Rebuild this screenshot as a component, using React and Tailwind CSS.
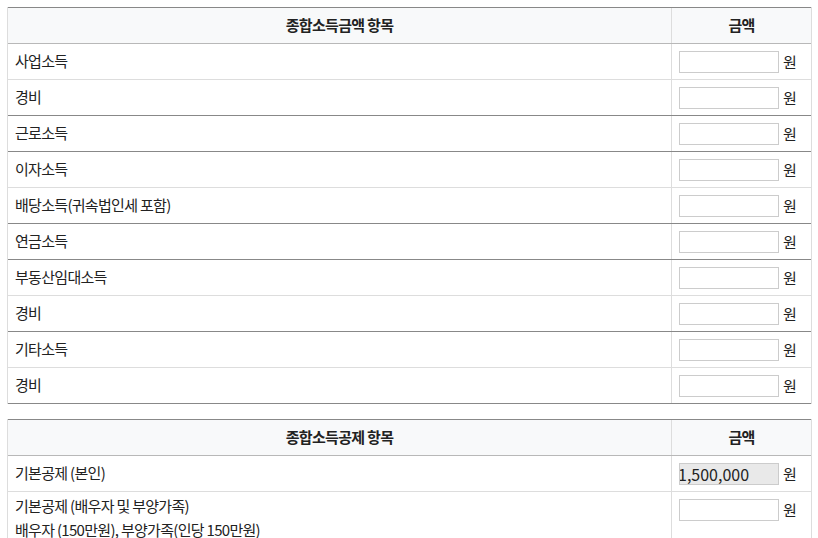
import React from "react";

const incomeRows = [
  { label: "사업소득", line: "light" },
  { label: "경비", line: "dark" },
  { label: "근로소득", line: "dark" },
  { label: "이자소득", line: "light" },
  { label: "배당소득(귀속법인세 포함)", line: "dark" },
  { label: "연금소득", line: "dark" },
  { label: "부동산임대소득", line: "light" },
  { label: "경비", line: "dark" },
  { label: "기타소득", line: "light" },
  { label: "경비", line: "dark" },
];

function HeaderRow({ title }) {
  return (
    <div className="flex h-[37px] border-t border-b border-t-[#888] border-b-[#b8b8b8] bg-[#f8f9fa] font-bold">
      <div className="flex flex-1 items-center justify-center pb-[1px]">{title}</div>
      <div className="flex w-[140px] items-center justify-center border-l border-[#dddddd] pb-[1px]">금액</div>
    </div>
  );
}

function AmountCell({ value, disabled }) {
  return (
    <div className="flex w-[140px] items-start border-l border-[#dddddd] pl-[7px] pt-[7px]">
      <input
        type="text"
        defaultValue={value}
        disabled={disabled}
        className={`h-[22px] w-[100px] border border-[#cccccc] px-0 indent-[-2px] text-[16px] tracking-normal text-[#222] outline-none ${disabled ? "bg-[#e9e9e9]" : "bg-white"}`}
      />
      <span className="ml-[4px] leading-[21px]">원</span>
    </div>
  );
}

export default function App() {
  return (
    <div
      className="min-h-[538px] bg-white pt-[7px] pl-[7px] text-[15px] text-[#222] tracking-[-0.7px]"
      style={{ fontFamily: '"Noto Sans CJK KR", "Noto Sans", sans-serif' }}
    >
      {/* 종합소득금액 */}
      <div className="w-[805px] border-l border-r border-[#dddddd]">
        <HeaderRow title="종합소득금액 항목" />
        {incomeRows.map((row, i) => (
          <div
            key={i}
            className={`flex h-[36px] border-b ${row.line === "dark" ? "border-[#888]" : "border-[#dddddd]"}`}
          >
            <div className="flex flex-1 items-center pl-[7px] pb-[1px]">{row.label}</div>
            <AmountCell />
          </div>
        ))}
      </div>

      {/* 종합소득공제 */}
      <div className="mt-[15px] w-[805px] border-l border-r border-[#dddddd]">
        <HeaderRow title="종합소득공제 항목" />
        <div className="flex h-[36px] border-b border-[#dddddd]">
          <div className="flex flex-1 items-center pl-[7px] pb-[1px]">기본공제 (본인)</div>
          <AmountCell value="1,500,000" disabled />
        </div>
        <div className="flex h-[60px] border-b border-[#dddddd]">
          <div className="flex-1 pl-[7px] pt-[2px] leading-[24px]">
            <div>기본공제 (배우자 및 부양가족)</div>
            <div>배우자 (150만원), 부양가족(인당 150만원)</div>
          </div>
          <AmountCell />
        </div>
      </div>
    </div>
  );
}
